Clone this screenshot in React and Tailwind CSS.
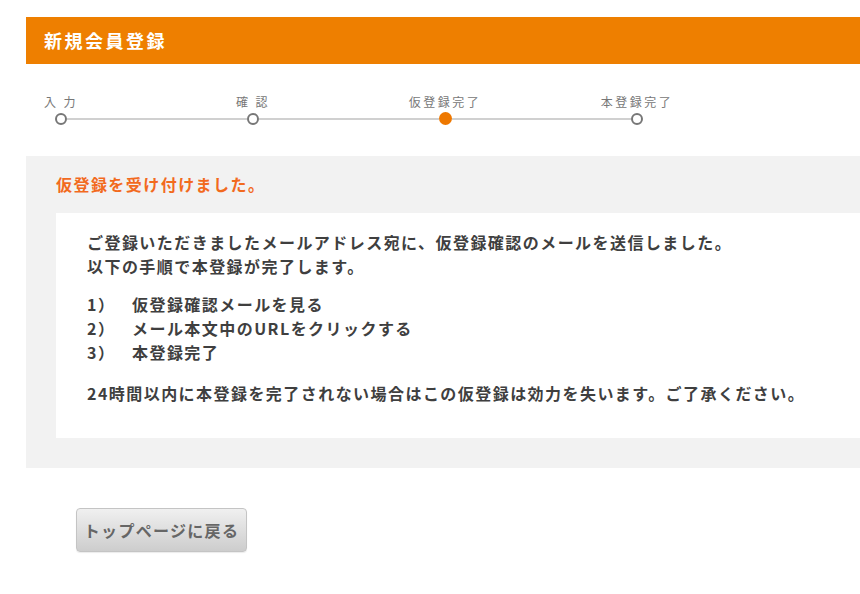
import React from 'react';

const steps = [
    { label: '入 力', active: false },
    { label: '確 認', active: false },
    { label: '仮登録完了', active: true },
    { label: '本登録完了', active: false },
];

const procedure = [
    { no: '1）', text: '仮登録確認メールを見る' },
    { no: '2）', text: 'メール本文中のURLをクリックする' },
    { no: '3）', text: '本登録完了' },
];

const StepBar = () => (
    <div className="mt-[31px]">
        <div className="flex gap-[122px]">
            {steps.map((step) => (
                <div key={step.label} className="w-[70px] flex flex-col items-center">
                    <span className="whitespace-nowrap font-normal text-[12px] leading-[14px] tracking-[2.5px] text-[#777]">
                        {step.label}
                    </span>
                </div>
            ))}
        </div>
        <div className="flex items-center ml-[29px] mt-[3px]">
            {steps.map((step, i) => (
                <React.Fragment key={step.label}>
                    {step.active ? (
                        <span className="block w-[13px] h-[13px] rounded-full bg-[#ee7800] shrink-0" />
                    ) : (
                        <span className="block w-[12px] h-[12px] rounded-full border-2 border-[#777] bg-white shrink-0" />
                    )}
                    {i < steps.length - 1 && (
                        <span className={`block h-[2px] bg-[#d0d0d0] ${step.active ? 'w-[179px]' : 'w-[180px]'}`} />
                    )}
                </React.Fragment>
            ))}
        </div>
    </div>
);

const App = () => {
    return (
        <div
            className="w-full min-h-[594px] bg-white overflow-hidden"
            style={{ fontFamily: '"Noto Sans CJK JP", "Noto Sans", sans-serif' }}
        >
            <div className="ml-[26px] w-[960px] pt-[17px] font-bold">
                {/* header */}
                <div className="h-[47px] bg-[#ee7f00] flex items-center pl-[18px]">
                    <h1 className="text-[18px] tracking-[2.5px] text-white">新規会員登録</h1>
                </div>

                <StepBar />

                {/* message panel */}
                <div className="mt-[31px] bg-[#f2f2f2] pl-[30px] pt-[16px] pb-[30px]">
                    <p className="text-[16px] leading-[24px] tracking-[1.45px] text-[#f26a1e]">
                        仮登録を受け付けました。
                    </p>
                    <div className="mt-[17px] bg-white pl-[31px] pt-[17px] pb-[33px] text-[16px] leading-[24px] tracking-[1.45px] text-[#3f3f3f]">
                        <p>
                            ご登録いただきましたメールアドレス宛に、仮登録確認のメールを送信しました。
                            <br />
                            以下の手順で本登録が完了します。
                        </p>
                        <ul className="mt-[14px]">
                            {procedure.map((row) => (
                                <li key={row.no} className="flex">
                                    <span className="w-[45px]">{row.no}</span>
                                    <span>{row.text}</span>
                                </li>
                            ))}
                        </ul>
                        <p className="mt-[17px]">
                            24時間以内に本登録を完了されない場合はこの仮登録は効力を失います。ご了承ください。
                        </p>
                    </div>
                </div>

                {/* back button */}
                <div className="mt-[40px] pl-[50px]">
                    <button
                        type="button"
                        className="w-[171px] h-[44px] rounded-[4px] border border-[#c4c4c4] bg-gradient-to-b from-[#f0f0f0] to-[#cdcdcd] text-[16px] tracking-[1.3px] text-[#666] font-bold shadow-[0_1px_1px_rgba(0,0,0,0.08)]"
                    >
                        トップページに戻る
                    </button>
                </div>
            </div>
        </div>
    );
};

export default App;
